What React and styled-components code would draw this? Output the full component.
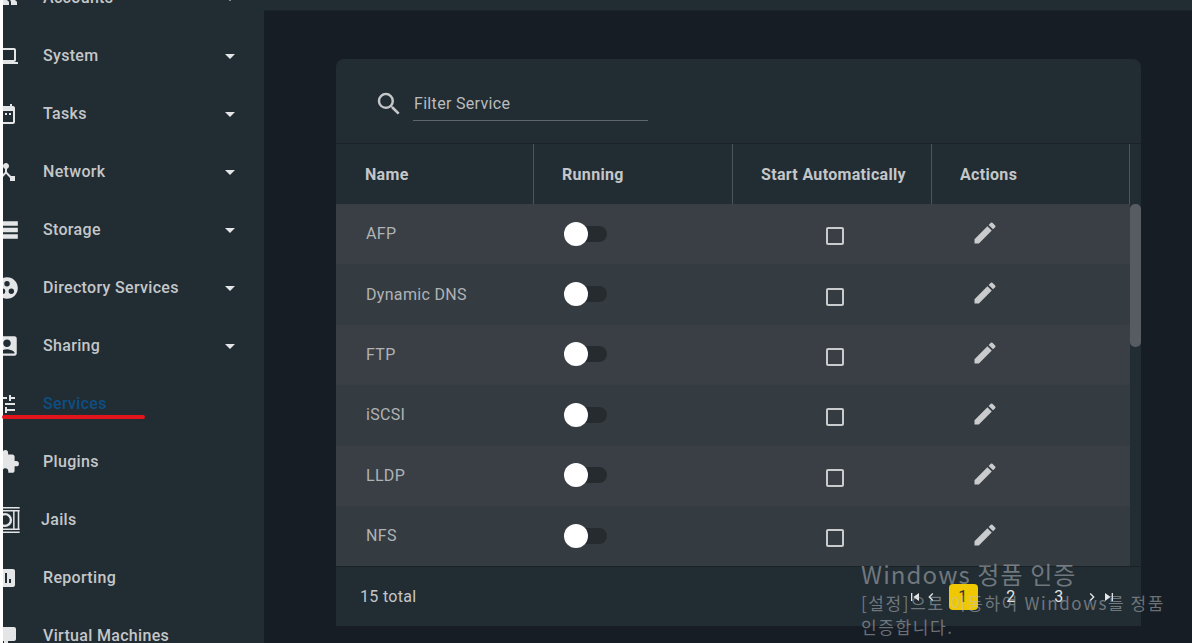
import React from "react";
import styled, { createGlobalStyle } from "styled-components";
import {
  MdPeople, MdLaptop, MdDateRange, MdDeviceHub, MdStorage, MdGroupWork, MdAccountBox,
  MdTune, MdExtension, MdInsertChart, MdDesktopWindows, MdSearch, MdEdit, MdSkipPrevious, MdSkipNext,
  MdChevronLeft, MdChevronRight, MdArrowDropDown, MdCheckBoxOutlineBlank,
} from "react-icons/md";

const GlobalStyle = createGlobalStyle`
  html, body {
    margin: 0;
    width: 1192px;
    height: 643px;
    overflow: hidden;
    background: #fff;
    font-family: Roboto, "Noto Sans CJK KR", sans-serif;
  }
`;

const Page = styled.div`
  position: relative;
  display: flex;
  width: 1192px;
  height: 643px;
  padding-left: 3px;
  box-sizing: border-box;
  overflow: hidden;
  letter-spacing: 0.32px;
`;

const Sidebar = styled.nav`
  width: 261px;
  flex: none;
  background: #222c33;
  overflow: hidden;
`;

const NavList = styled.div`
  margin-top: -31px;
  display: flex;
  flex-direction: column;
`;

const NavItem = styled.div`
  height: 58px;
  display: flex;
  align-items: center;
  flex: none;
  color: ${({ $active }) => ($active ? "#0d4f83" : "#c4c7c9")};
  font-size: 16px;
  font-weight: 500;
`;

const NavIcon = styled.span`
  width: 24px;
  height: 24px;
  margin-left: -9px;
  flex: none;
  display: flex;
  align-items: center;
  color: #e4e5e6;
  svg {
    width: ${({ $size }) => $size || 24}px;
    height: ${({ $size }) => $size || 24}px;
    flex: none;
  }
`;

const NavLabel = styled.span`
  margin-left: ${({ $tight }) => ($tight ? "23px" : "25px")};
  flex: 1;
  line-height: 20px;
`;

const Caret = styled.span`
  width: 24px;
  height: 24px;
  margin-right: 22px;
  display: flex;
  color: #e4e5e6;
  svg { width: 24px; height: 24px; }
`;

const Main = styled.main`
  flex: 1;
  background: #161d24;
  display: flex;
  flex-direction: column;
  align-items: flex-start;
`;

const TopBar = styled.div`
  width: 100%;
  height: 11px;
  background: #222c33;
  border-bottom: 1px solid #1d252c;
  box-sizing: border-box;
`;

const Card = styled.section`
  margin: 48px 0 0 72px;
  width: 805px;
  height: 567px;
  background: #222c33;
  border-radius: 8px 8px 0 0;
  display: flex;
  flex-direction: column;
  overflow: hidden;
`;

const FilterBar = styled.div`
  height: 85px;
  flex: none;
  display: flex;
  align-items: flex-start;
  box-sizing: border-box;
  padding: 30px 0 0 38px;
  border-bottom: 1px solid #1a2228;
  color: #c4c7c9;
`;

const SearchIcon = styled(MdSearch)`
  width: 30px;
  height: 30px;
  flex: none;
  margin-right: 9px;
`;

const FilterField = styled.div`
  width: 235px;
  height: 32px;
  box-sizing: border-box;
  padding-left: 1px;
  border-bottom: 1px solid #5e666c;
  font-size: 16px;
  line-height: 29px;
  color: #b9bcbe;
`;

const HeaderRow = styled.div`
  height: 60px;
  flex: none;
  display: grid;
  grid-template-columns: 198px 199px 199px 198px 11px;
`;

const HeaderCell = styled.div`
  display: flex;
  align-items: center;
  padding-left: ${({ $first }) => ($first ? "29px" : "28px")};
  border-right: 1px solid #4d555b;
  font-size: 16px;
  font-weight: 700;
  color: #c4c7c9;
  white-space: nowrap;
`;

const Scroller = styled.div`
  position: relative;
  height: 362px;
  flex: none;
  overflow: hidden;
`;

const Row = styled.div`
  height: 60.4px;
  display: grid;
  grid-template-columns: 198px 199px 199px 198px 11px;
  background: ${({ $alt }) => ($alt ? "#353c41" : "#393f44")};
`;

const Cell = styled.div`
  display: flex;
  align-items: center;
  font-size: 16px;
  color: #b0b3b6;
`;

const NameCell = styled(Cell)`
  padding-left: 30px;
  padding-bottom: 1px;
`;

const Toggle = styled.div`
  position: relative;
  margin-left: 31px;
  margin-bottom: 1px;
  width: 42px;
  height: 16px;
  border-radius: 8px;
  background: #262b30;
  &::before {
    content: "";
    position: absolute;
    left: -1px;
    top: -4px;
    width: 24px;
    height: 24px;
    border-radius: 50%;
    background: #fff;
  }
`;

const CheckCell = styled(Cell)`
  justify-content: center;
  padding: 4px 0 0 5px;
  color: #c9cbcc;
  svg { width: 24px; height: 24px; }
`;

const EditCell = styled(Cell)`
  padding: 0 0 3px 39px;
  color: #c9cbcc;
  svg { width: 28px; height: 28px; }
`;

const Scrollbar = styled.div`
  position: absolute;
  top: 0;
  right: 0;
  width: 11px;
  height: 100%;
  background: #222c33;
`;

const Thumb = styled.div`
  height: 143px;
  border-radius: 5px;
  background: #565c62;
`;

const Footer = styled.footer`
  flex: 1;
  display: flex;
  align-items: center;
  border-top: 1px solid #1a2228;
  padding-left: 24px;
  font-size: 16px;
  color: #c4c7c9;
`;

const Pager = styled.div`
  display: flex;
  align-items: center;
  margin-left: auto;
  margin-right: 24px;
  color: #e4e5e6;
  font-size: 16px;
`;

const PagerIcon = styled.span`
  display: flex;
  width: ${({ $w }) => $w || 16}px;
  justify-content: center;
  svg { width: 16px; height: 16px; flex: none; }
`;

const PageNumber = styled.span`
  width: 29px;
  height: 26px;
  margin: 0 9.5px;
  display: flex;
  align-items: center;
  justify-content: center;
  border-radius: 4px;
  background: ${({ $active }) => ($active ? "#f0c800" : "transparent")};
  color: ${({ $active }) => ($active ? "#333" : "#e4e5e6")};
`;

// activation notice and the hand drawn mark sit on top of the app
const Watermark = styled.div`
  position: absolute;
  left: 861px;
  top: 558px;
  width: 312px;
  color: rgba(190, 195, 200, 0.5);
  pointer-events: none;
  font-family: "Noto Sans CJK KR", sans-serif;
`;

const WatermarkTitle = styled.div`
  font-size: 24px;
  line-height: 32px;
  letter-spacing: 1.1px;
`;

const WatermarkText = styled.div`
  font-size: 17px;
  line-height: 24px;
  margin-top: 1px;
  letter-spacing: 1.6px;
`;

const RedMark = styled.div`
  position: absolute;
  left: 2px;
  top: 415px;
  width: 143px;
  height: 4px;
  border-radius: 2px;
  background: #e2141c;
`;

// no package has the jail icon, so it is drawn here
const JailIcon = () => (
  <svg viewBox="0 0 24 24" fill="none" stroke="currentColor" strokeWidth="1.3">
    <path d="M1 1.5h21M1 22.5h21M1 4h21M1 20h21M17 4v16M21 4v16" />
    <circle cx="9.5" cy="12" r="5" strokeWidth="2" />
  </svg>
);

const navItems = [
  { label: "Accounts", icon: <MdPeople />, caret: true },
  { label: "System", icon: <MdLaptop />, caret: true },
  { label: "Tasks", icon: <MdDateRange />, caret: true },
  { label: "Network", icon: <MdDeviceHub />, caret: true },
  { label: "Storage", icon: <MdStorage />, size: 26, caret: true },
  { label: "Directory Services", icon: <MdGroupWork />, size: 26, caret: true },
  { label: "Sharing", icon: <MdAccountBox />, size: 26, caret: true },
  { label: "Services", icon: <MdTune />, active: true },
  { label: "Plugins", icon: <MdExtension />, size: 26 },
  { label: "Jails", icon: <JailIcon />, size: 28, tight: true },
  { label: "Reporting", icon: <MdInsertChart /> },
  { label: "Virtual Machines", icon: <MdDesktopWindows /> },
];

const services = ["AFP", "Dynamic DNS", "FTP", "iSCSI", "LLDP", "NFS"];

export default function App() {
  return (
    <>
      <GlobalStyle />
      <Page>
        <Sidebar>
          <NavList>
            {navItems.map((item) => (
              <NavItem key={item.label} $active={item.active}>
                <NavIcon $size={item.size}>{item.icon}</NavIcon>
                <NavLabel $tight={item.tight}>{item.label}</NavLabel>
                {item.caret && (
                  <Caret>
                    <MdArrowDropDown />
                  </Caret>
                )}
              </NavItem>
            ))}
          </NavList>
        </Sidebar>
        <Main>
          <TopBar />
          <Card>
            <FilterBar>
              <SearchIcon />
              <FilterField>Filter Service</FilterField>
            </FilterBar>
            <HeaderRow>
              <HeaderCell $first>Name</HeaderCell>
              <HeaderCell>Running</HeaderCell>
              <HeaderCell>Start Automatically</HeaderCell>
              <HeaderCell>Actions</HeaderCell>
            </HeaderRow>
            <Scroller>
              {services.map((name, i) => (
                <Row key={name} $alt={i % 2 === 1}>
                  <NameCell>{name}</NameCell>
                  <Cell>
                    <Toggle />
                  </Cell>
                  <CheckCell>
                    <MdCheckBoxOutlineBlank />
                  </CheckCell>
                  <EditCell>
                    <MdEdit />
                  </EditCell>
                </Row>
              ))}
              <Scrollbar>
                <Thumb />
              </Scrollbar>
            </Scroller>
            <Footer>
              15 total
              <Pager>
                <PagerIcon><MdSkipPrevious /></PagerIcon>
                <PagerIcon><MdChevronLeft /></PagerIcon>
                <PageNumber $active>1</PageNumber>
                <PageNumber>2</PageNumber>
                <PageNumber>3</PageNumber>
                <PagerIcon $w={18}><MdChevronRight /></PagerIcon>
                <PagerIcon><MdSkipNext /></PagerIcon>
              </Pager>
            </Footer>
          </Card>
        </Main>
        <RedMark />
        <Watermark>
          <WatermarkTitle>Windows 정품 인증</WatermarkTitle>
          <WatermarkText>[설정]으로 이동하여 Windows를 정품 인증합니다.</WatermarkText>
        </Watermark>
      </Page>
    </>
  );
}
